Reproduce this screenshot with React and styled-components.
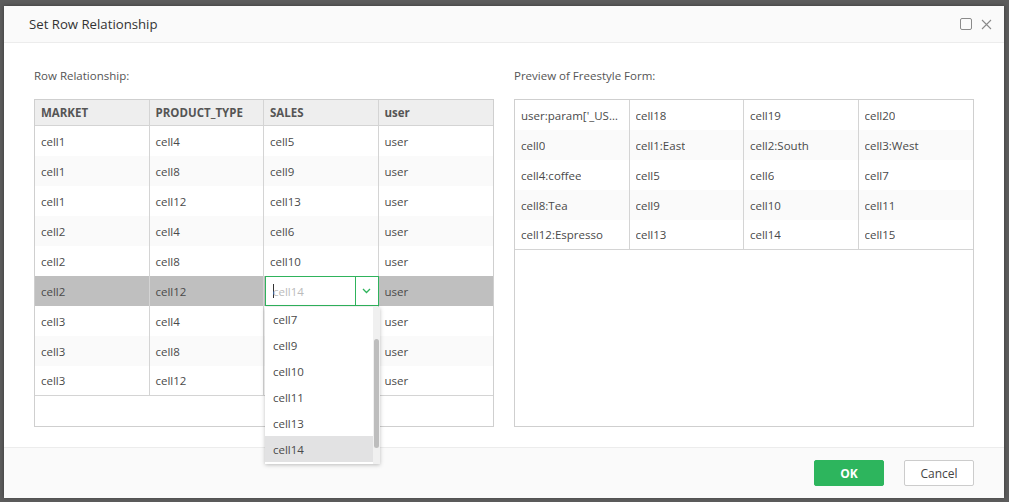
import React from "react";
import styled, { createGlobalStyle } from "styled-components";

const Global = createGlobalStyle`
  html, body { margin: 0; padding: 0; }
  body {
    background: #5c5c5c;
    font-family: "Open Sans", "Noto Sans", Arial, sans-serif;
    font-size: 12px;
    color: #444;
  }
  * { box-sizing: border-box; }
`;

const Overlay = styled.div`
  width: 1009px;
  height: 502px;
  padding: 6px 5px 5px 4px;
  background: #5c5c5c;
  display: flex;
`;

const Dialog = styled.div`
  flex: 1;
  background: #fff;
  display: flex;
  flex-direction: column;
  box-shadow: 0 0 4px rgba(0,0,0,0.4);
`;

const Header = styled.div`
  height: 37px;
  flex: none;
  display: flex;
  align-items: center;
  padding: 0 12px 0 25px;
  background: #fafafa;
  border-bottom: 1px solid #ececec;
`;

const Title = styled.div`
  flex: 1;
  font-size: 13.2px;
  color: #333;
`;

const HeadIcons = styled.div`
  display: flex;
  align-items: center;
  gap: 9px;
  color: #888;
`;

const Body = styled.div`
  flex: 1;
  display: grid;
  grid-template-columns: 460px 460px;
  column-gap: 20px;
  padding: 26px 30px 20px 30px;
`;

const Panel = styled.div`
  display: flex;
  flex-direction: column;
`;

const Label = styled.div`
  height: 30px;
  font-size: 11.5px;
  color: #555;
  line-height: 14px;
`;

const TableBox = styled.div`
  height: 328px;
  border: 1px solid #cfcfcf;
  position: relative;
`;

const Row = styled.div`
  display: grid;
  grid-template-columns: repeat(4, 1fr);
  height: ${(p) => (p.$head ? "26px" : "30px")};
  background: ${(p) =>
    p.$head ? "#eeeeee" : p.$sel ? "#bfbfbf" : p.$stripe ? "#fafafa" : "#fff"};
  border-bottom: ${(p) => (p.$head || p.$last ? "1px solid #d4d4d4" : "none")};
`;

const Cell = styled.div`
  display: flex;
  align-items: center;
  padding: 0 6px;
  border-right: 1px solid #d4d4d4;
  overflow: hidden;
  white-space: nowrap;
  font-weight: ${(p) => (p.$bold ? 700 : 400)};
  color: ${(p) => (p.$bold ? "#555" : "#4a4a4a")};
  font-size: 11.5px;
  &:last-child { border-right: none; }
`;

const Ellip = styled.span`
  overflow: hidden;
  text-overflow: ellipsis;
  white-space: nowrap;
`;

const ComboCell = styled.div`
  position: relative;
  display: flex;
  padding-left: 1px;
`;

const Combo = styled.div`
  flex: 1;
  display: flex;
  background: #fff;
  border: 1px solid #2fb35c;
`;

const ComboInput = styled.div`
  flex: 1;
  display: flex;
  align-items: center;
  padding-left: 7px;
  color: #bbb;
  font-size: 11.5px;
  border-right: 1px solid #2fb35c;
`;

const Caret = styled.span`
  display: inline-block;
  width: 1px;
  height: 14px;
  background: #333;
  margin-right: -1px;
`;

const ComboBtn = styled.div`
  width: 22px;
  display: flex;
  align-items: center;
  justify-content: center;
`;

const Dropdown = styled.div`
  position: absolute;
  top: 31px;
  left: 1px;
  width: 115px;
  height: 157px;
  background: #fff;
  box-shadow: 0 1px 4px rgba(0,0,0,0.25);
  z-index: 5;
  display: flex;
  overflow: hidden;
`;

const List = styled.div`
  flex: 1;
  display: flex;
  flex-direction: column;
  margin-top: -1px;
`;

const Item = styled.div`
  height: 26px;
  flex: none;
  display: flex;
  align-items: center;
  padding-left: 8px;
  font-size: 11.5px;
  color: #4a4a4a;
  background: ${(p) => (p.$active ? "#e2e2e3" : "transparent")};
`;

const Track = styled.div`
  width: 7px;
  background: #f0f0f0;
  display: flex;
  flex-direction: column;
  padding-top: 32px;
`;

const Thumb = styled.div`
  width: 5px;
  margin-left: 1px;
  height: 109px;
  background: #bdbdbd;
  border-radius: 3px;
`;

const Footer = styled.div`
  height: 51px;
  flex: none;
  background: #fafafa;
  border-top: 1px solid #ececec;
  display: flex;
  align-items: center;
  justify-content: flex-end;
  gap: 20px;
  padding-right: 30px;
`;

const Button = styled.button`
  width: 70px;
  height: 26px;
  border-radius: 2px;
  font-family: inherit;
  font-size: 12px;
  cursor: pointer;
  border: 1px solid ${(p) => (p.$primary ? "#2db55d" : "#cccccc")};
  background: ${(p) => (p.$primary ? "#2db55d" : "#fff")};
  color: ${(p) => (p.$primary ? "#fff" : "#444")};
  font-weight: ${(p) => (p.$primary ? 700 : 400)};
`;

const leftRows = [
  ["cell1", "cell4", "cell5", "user"],
  ["cell1", "cell8", "cell9", "user"],
  ["cell1", "cell12", "cell13", "user"],
  ["cell2", "cell4", "cell6", "user"],
  ["cell2", "cell8", "cell10", "user"],
  ["cell2", "cell12", null, "user"],
  ["cell3", "cell4", "", "user"],
  ["cell3", "cell8", "", "user"],
  ["cell3", "cell12", "", "user"],
];

const rightRows = [
  ["user:param['_USER_']", "cell18", "cell19", "cell20"],
  ["cell0", "cell1:East", "cell2:South", "cell3:West"],
  ["cell4:coffee", "cell5", "cell6", "cell7"],
  ["cell8:Tea", "cell9", "cell10", "cell11"],
  ["cell12:Espresso", "cell13", "cell14", "cell15"],
];

const options = ["cell7", "cell9", "cell10", "cell11", "cell13", "cell14"];

function Chevron() {
  return (
    <svg width="9" height="6" viewBox="0 0 9 6">
      <path d="M1 1l3.5 3.5L8 1" fill="none" stroke="#2fb35c" strokeWidth="1.3" />
    </svg>
  );
}

export default function App() {
  return (
    <>
      <Global />
      <Overlay>
        <Dialog>
          <Header>
            <Title>Set Row Relationship</Title>
            <HeadIcons>
              <svg width="12" height="12" viewBox="0 0 12 12">
                <rect x="0.5" y="0.5" width="11" height="11" rx="1.5" fill="none" stroke="#8a8a8a" />
              </svg>
              <svg width="11" height="11" viewBox="0 0 11 11">
                <path d="M1 1l9 9M10 1L1 10" stroke="#8a8a8a" strokeWidth="1.1" />
              </svg>
            </HeadIcons>
          </Header>
          <Body>
            <Panel>
              <Label>Row Relationship:</Label>
              <TableBox>
                <Row $head>
                  {["MARKET", "PRODUCT_TYPE", "SALES", "user"].map((h) => (
                    <Cell key={h} $bold>{h}</Cell>
                  ))}
                </Row>
                {leftRows.map((r, i) => (
                  <Row key={i} $stripe={i % 2 === 1} $sel={i === 5} $last={i === leftRows.length - 1}>
                    {r.map((c, j) =>
                      c === null ? (
                        <ComboCell key={j}>
                          <Combo>
                            <ComboInput>
                              <Caret />
                              cell14
                            </ComboInput>
                            <ComboBtn>
                              <Chevron />
                            </ComboBtn>
                          </Combo>
                          <Dropdown>
                            <List>
                              {options.map((o) => (
                                <Item key={o} $active={o === "cell14"}>{o}</Item>
                              ))}
                            </List>
                            <Track>
                              <Thumb />
                            </Track>
                          </Dropdown>
                        </ComboCell>
                      ) : (
                        <Cell key={j}>{c}</Cell>
                      )
                    )}
                  </Row>
                ))}
              </TableBox>
            </Panel>
            <Panel>
              <Label>Preview of Freestyle Form:</Label>
              <TableBox>
                {rightRows.map((r, i) => (
                  <Row key={i} $stripe={i % 2 === 1} $last={i === rightRows.length - 1}>
                    {r.map((c, j) => (
                      <Cell key={j}>
                        <Ellip>{c}</Ellip>
                      </Cell>
                    ))}
                  </Row>
                ))}
              </TableBox>
            </Panel>
          </Body>
          <Footer>
            <Button $primary>OK</Button>
            <Button>Cancel</Button>
          </Footer>
        </Dialog>
      </Overlay>
    </>
  );
}
